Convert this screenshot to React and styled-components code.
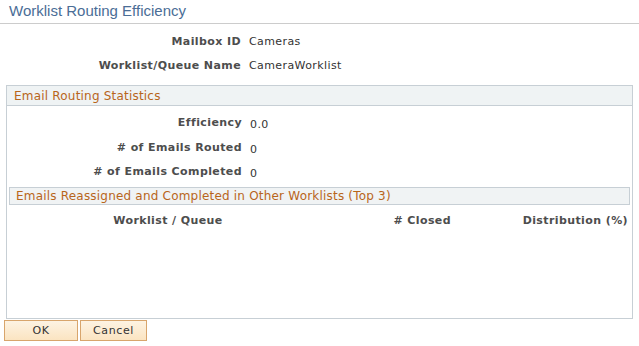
import React from 'react'
import styled, { createGlobalStyle } from 'styled-components'

const GlobalStyle = createGlobalStyle`
  html, body {
    margin: 0;
    padding: 0;
    background: #ffffff;
  }
  body {
    font-family: "DejaVu Sans", Verdana, sans-serif;
    font-size: 11px;
    color: #333333;
  }
`

const Page = styled.div`
  width: 639px;
  height: 346px;
  overflow: hidden;
`

const Title = styled.h1`
  margin: 0;
  padding: 2px 0 0 9px;
  height: 21px;
  font-family: "Liberation Sans", Arial, sans-serif;
  font-weight: normal;
  font-size: 15px;
  line-height: 18px;
  color: #4a6d96;
  border-bottom: 1px solid #cccccc;
`

const FieldGrid = styled.div`
  display: grid;
  grid-template-columns: ${p => p.labelWidth}px 1fr;
  column-gap: 8px;
  row-gap: ${p => p.gap}px;
  padding-top: ${p => p.top}px;
`

const Label = styled.div`
  text-align: right;
  font-weight: bold;
  color: #4d4d4d;
  line-height: 14px;
  letter-spacing: 0.4px;
`

const Value = styled.div`
  color: #333333;
  line-height: 14px;
  letter-spacing: 0.4px;
  padding-top: ${p => (p.low ? 2 : 0)}px;
`

const Box = styled.div`
  margin: 12px 0 0 6px;
  width: 625px;
  height: 232px;
  border: 1px solid #c7cfd5;
  display: flex;
  flex-direction: column;
`

const SectionHeader = styled.div`
  height: 19px;
  line-height: 20px;
  padding-left: 7px;
  background: #eff3f4;
  border-bottom: 1px solid #c7cfd5;
  color: #b8651b;
  font-size: 12px;
  letter-spacing: 0.2px;
`

const SubHeader = styled.div`
  margin: 6px 2px 0 2px;
  height: 16px;
  line-height: 17px;
  padding-left: 6px;
  background: #f0f3f4;
  border: 1px solid #c7cfd5;
  color: #b8651b;
  font-size: 12px;
  letter-spacing: 0.2px;
`

const TableHead = styled.div`
  display: grid;
  grid-template-columns: 322px 122px 177px;
  padding-top: 9px;
`

const ColHead = styled.div`
  font-weight: bold;
  color: #4d4d4d;
  line-height: 14px;
  letter-spacing: 0.4px;
  text-align: ${p => p.align};
`

const ButtonRow = styled.div`
  display: flex;
  gap: 2px;
  padding: 1px 0 0 4px;
`

const Button = styled.button`
  width: ${p => p.w}px;
  height: 21px;
  padding: 0;
  border: 1px solid #d8a56c;
  background: linear-gradient(#fdf3e3, #fbe4c1);
  font-family: "DejaVu Sans", Verdana, sans-serif;
  font-size: 11px;
  color: #333333;
  letter-spacing: 0.6px;
`

export default function App() {
  return (
    <Page>
      <GlobalStyle />
      <Title>Worklist Routing Efficiency</Title>
      <FieldGrid labelWidth={241} gap={10} top={11}>
        <Label>Mailbox ID</Label>
        <Value>Cameras</Value>
        <Label>Worklist/Queue Name</Label>
        <Value>CameraWorklist</Value>
      </FieldGrid>
      <Box>
        <SectionHeader>Email Routing Statistics</SectionHeader>
        <FieldGrid labelWidth={235} gap={8.5} top={10}>
          <Label>Efficiency</Label>
          <Value low>0.0</Value>
          <Label># of Emails Routed</Label>
          <Value low>0</Value>
          <Label># of Emails Completed</Label>
          <Value low>0</Value>
        </FieldGrid>
        <SubHeader>Emails Reassigned and Completed in Other Worklists (Top 3)</SubHeader>
        <TableHead>
          <ColHead align="center">Worklist / Queue</ColHead>
          <ColHead align="right"># Closed</ColHead>
          <ColHead align="right">Distribution (%)</ColHead>
        </TableHead>
      </Box>
      <ButtonRow>
        <Button w={74}>OK</Button>
        <Button w={67}>Cancel</Button>
      </ButtonRow>
    </Page>
  )
}
